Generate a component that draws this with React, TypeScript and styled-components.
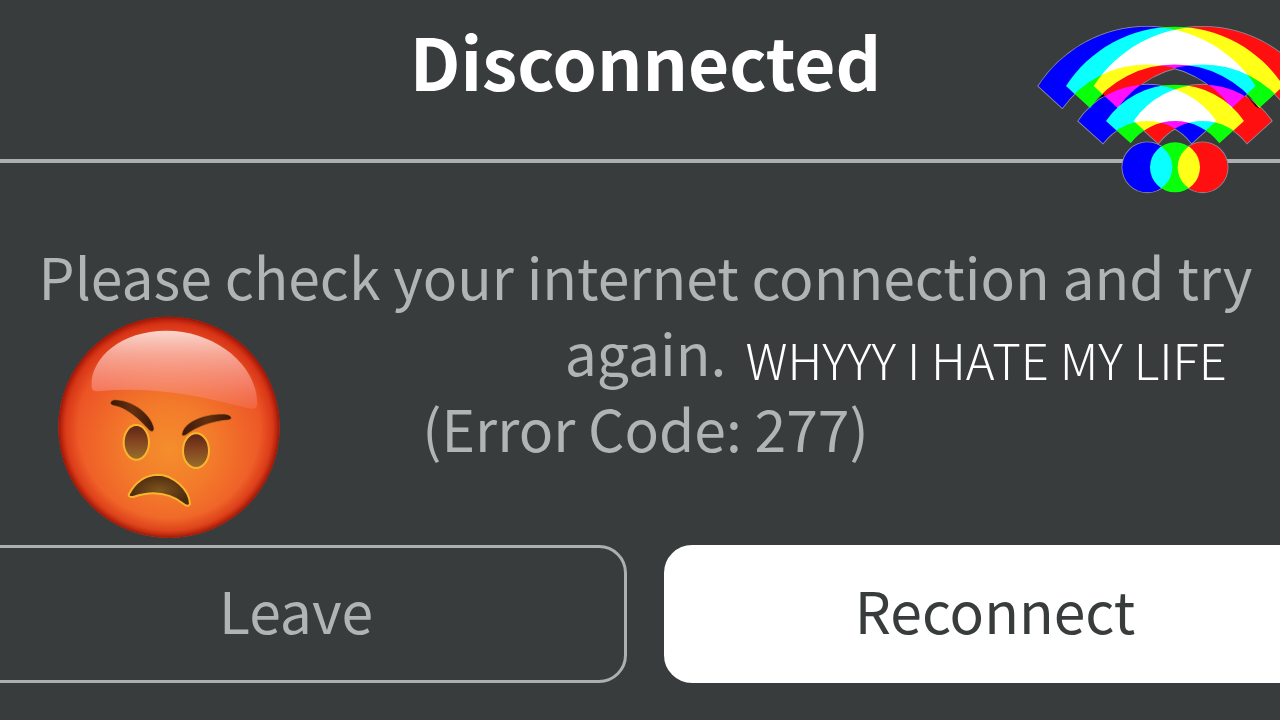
import React from "react";
import styled, { createGlobalStyle } from "styled-components";

const colors = {
  panel: "#393c3c",
  line: "#adb0b0",
  text: "#b1b4b4",
  white: "#ffffff",
};

const GlobalStyle = createGlobalStyle`
  *, *::before, *::after { box-sizing: border-box; }
  body {
    margin: 0;
    background: ${colors.panel};
    font-family: "Noto Sans CJK SC", "Noto Sans", sans-serif;
  }
`;

const Page = styled.div`
  position: relative;
  min-height: 100vh;
  overflow: hidden;
  background: ${colors.panel};
`;

/* The dialog is wider than the window and bleeds off both sides. */
const Dialog = styled.main`
  display: flex;
  flex-direction: column;
  margin: 0 -46px 0 -35px;
`;

const Header = styled.header`
  display: flex;
  justify-content: center;
  padding: 12px 0 51px;
  border-bottom: 4px solid ${colors.line};
`;

const Title = styled.h1`
  margin: 0;
  color: ${colors.white};
  font-size: 71px;
  font-weight: 700;
  line-height: 96px;
`;

const Message = styled.section`
  position: relative;
  padding: 74px 60px 80px;
  text-align: center;
`;

const MessageText = styled.p`
  margin: 0;
  color: ${colors.text};
  font-size: 57px;
  line-height: 76px;
`;

const Caption = styled.p`
  position: absolute;
  top: 160px;
  left: calc(50% + 100px);
  margin: 0;
  color: ${colors.white};
  font-size: 49px;
  font-weight: 300;
  line-height: 72px;
  white-space: nowrap;
`;

const Actions = styled.div`
  display: grid;
  grid-template-columns: 1fr 1fr;
  gap: 37px;
`;

const ActionButton = styled.button<{ $primary?: boolean }>`
  height: 138px;
  padding: 0 0 10px;
  border: 3px solid ${(p) => (p.$primary ? colors.white : colors.line)};
  border-radius: 28px;
  background: ${(p) => (p.$primary ? colors.white : "transparent")};
  color: ${(p) => (p.$primary ? colors.panel : colors.text)};
  font-family: inherit;
  font-size: 57px;
  line-height: 76px;
  cursor: pointer;
`;

const WifiSticker = styled.svg`
  position: absolute;
  top: 10px;
  right: -20px;
  width: 280px;
  height: 200px;
`;

const WifiLayers = styled.g`
  isolation: isolate;
`;

const WifiLayer = styled.use`
  mix-blend-mode: screen;
`;

const AngrySticker = styled.svg`
  position: absolute;
  top: 300px;
  left: 40px;
  width: 260px;
  height: 250px;
`;

function GlitchWifi() {
  return (
    <WifiSticker viewBox="0 0 840 600" role="img" aria-label="Wi-Fi">
      <defs>
        <g id="wifi">
          <path d="M138 228A388 388 0 0 1 790 228L718 294A312 312 0 0 0 210 294Z" />
          <path d="M258 333A251 251 0 0 1 672 333L598 400A166 166 0 0 0 332 400Z" />
          <circle cx="465" cy="472" r="75" />
        </g>
      </defs>
      <g fill="none" stroke="#8f8c9c" strokeWidth="5">
        <use href="#wifi" x="-83" />
        <use href="#wifi" x="83" />
      </g>
      <WifiLayers>
        <WifiLayer href="#wifi" x="-83" fill="#0000ff" />
        <WifiLayer href="#wifi" fill="#0aff0a" />
        <WifiLayer href="#wifi" x="83" fill="#ff0f0f" />
      </WifiLayers>
      <path d="M676 252L720 297L708 290ZM250 252L240 264L254 258Z" fill="#000" />
    </WifiSticker>
  );
}

function AngryFace() {
  return (
    <AngrySticker viewBox="0 0 780 750" role="img" aria-label="Angry face">
      <defs>
        <radialGradient id="skin" gradientUnits="userSpaceOnUse" cx="387" cy="440" r="390" fx="387" fy="450">
          <stop offset="0" stopColor="#f48e2c" />
          <stop offset=".35" stopColor="#f37a2b" />
          <stop offset=".7" stopColor="#ee5a27" />
          <stop offset="1" stopColor="#e23f1e" />
        </radialGradient>
        <radialGradient id="rim" gradientUnits="userSpaceOnUse" cx="387" cy="382" r="333">
          <stop offset=".82" stopColor="#c41c08" stopOpacity="0" />
          <stop offset=".93" stopColor="#c41c08" stopOpacity=".4" />
          <stop offset="1" stopColor="#8c0c02" stopOpacity=".9" />
        </radialGradient>
        <linearGradient id="gloss" x1="0" y1="0" x2="0" y2="1">
          <stop offset="0" stopColor="#fde6e2" stopOpacity=".9" />
          <stop offset=".3" stopColor="#fabdb2" stopOpacity=".8" />
          <stop offset=".7" stopColor="#f9968a" stopOpacity=".62" />
          <stop offset="1" stopColor="#f8806c" stopOpacity=".35" />
        </linearGradient>
        <linearGradient id="eye" x1="0" y1="0" x2="0" y2="1">
          <stop offset="0" stopColor="#5a2316" />
          <stop offset=".45" stopColor="#82431f" />
          <stop offset="1" stopColor="#98702c" />
        </linearGradient>
        <linearGradient id="brow" x1="0" y1="0" x2="1" y2="0">
          <stop offset="0" stopColor="#3c1808" />
          <stop offset=".5" stopColor="#642f10" />
          <stop offset="1" stopColor="#3c1808" />
        </linearGradient>
        <radialGradient id="mouth">
          <stop offset="0" stopColor="#7d5420" />
          <stop offset="1" stopColor="#4d2a0c" />
        </radialGradient>
      </defs>
      <circle cx="387" cy="382" r="332" fill="url(#skin)" />
      <circle cx="387" cy="382" r="332" fill="url(#rim)" />
      <path
        d="M155 262C148 178 240 92 378 92C530 92 655 200 651 312C650 327 640 329 622 324C480 286 330 258 180 273C162 275 156 272 155 262Z"
        fill="url(#gloss)"
      />
      <g stroke="#f8b52e" strokeWidth="6" strokeLinejoin="round">
        <ellipse cx="289" cy="427" rx="38" ry="52" fill="url(#eye)" />
        <ellipse cx="468" cy="452" rx="39" ry="52" fill="url(#eye)" />
        <path
          d="M267 582C285 548 315 526 352 524C398 524 448 568 450 612C446 620 438 618 430 611C385 576 330 574 280 591C270 592 264 589 267 582Z"
          fill="url(#mouth)"
        />
      </g>
      <g fill="url(#brow)" stroke="#d9761c" strokeWidth="2">
        <path d="M212 306C216 298 228 298 242 301C290 308 336 350 342 385C342 396 334 397 326 389C298 358 262 326 226 318C214 316 210 312 212 306Z" />
        <path d="M426 401C432 368 486 342 546 342C562 341 574 347 574 354C573 361 560 360 546 362C506 368 468 382 439 404C431 409 425 408 426 401Z" />
      </g>
    </AngrySticker>
  );
}

export default function App() {
  return (
    <>
      <GlobalStyle />
      <Page>
        <Dialog>
          <Header>
            <Title>Disconnected</Title>
          </Header>
          <Message>
            <MessageText>
              Please check your internet connection and try again.
              <br />
              (Error Code: 277)
            </MessageText>
            <Caption>WHYYY I HATE MY LIFE</Caption>
          </Message>
          <Actions>
            <ActionButton type="button">Leave</ActionButton>
            <ActionButton type="button" $primary>
              Reconnect
            </ActionButton>
          </Actions>
        </Dialog>
        <GlitchWifi />
        <AngryFace />
      </Page>
    </>
  );
}
